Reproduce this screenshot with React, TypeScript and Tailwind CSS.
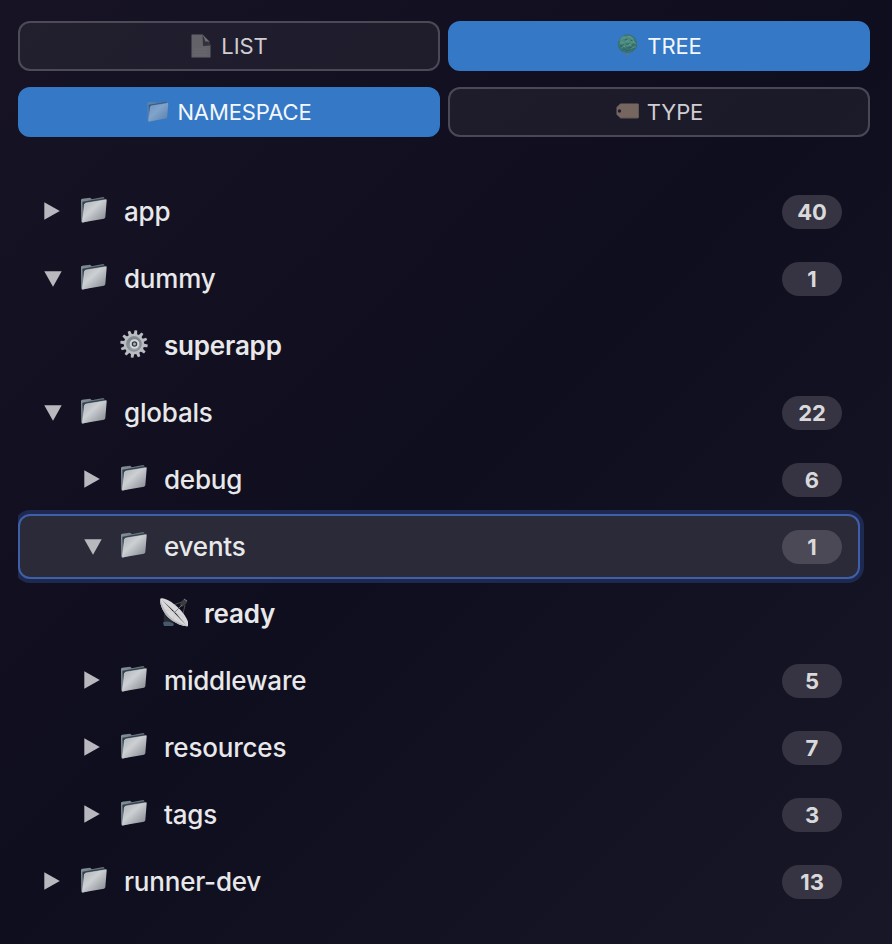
import React from "react";

type IconProps = { className?: string };

function Folder({ className = "" }: IconProps) {
  return (
    <svg viewBox="0 0 78 78" className={className} aria-hidden="true">
      <defs>
        <linearGradient id="folderFront" x1="0" y1="0" x2="1" y2="1">
          <stop offset="0" stopColor="#a9afb5" />
          <stop offset="0.42" stopColor="#cdd0d3" />
          <stop offset="1" stopColor="#7d838a" />
        </linearGradient>
        <linearGradient id="folderBack" x1="0" y1="0" x2="1" y2="0">
          <stop offset="0" stopColor="#86929b" />
          <stop offset="1" stopColor="#5c6973" />
        </linearGradient>
      </defs>
      <path d="M0 9 Q0 6 4 5 L27 2 Q30 2 32 7 L66 0 Q70 0 70 4 L72 58 L5 77 Q1 77 1 73Z" fill="url(#folderBack)" />
      <path d="M4 14 L30 10 L69 4 L72 10 L11 21 L6 68Z" fill="#35424c" />
      <path d="M10 24 Q10 20 15 18 L73 8 Q78 7 77 11 L73 60 Q73 64 69 65 L7 76 Q3 77 4 73Z" fill="url(#folderFront)" />
      <path d="M5 74 L10 24 Q10 20 15 18 L76 8" fill="none" stroke="#d3d8dc" strokeWidth="1.800" />
    </svg>
  );
}

function Page({ className = "" }: IconProps) {
  return (
    <svg viewBox="0 0 20 24" className={className} aria-hidden="true">
      <path d="M.5.5H11.500L19.500 11V23.500H.5Z" fill="#646269" />
      <path d="M11.500 1L19.500 11.500L12 12Z" fill="#34313c" />
      <path d="M11.500.5L19.500 8.500Q15.500 6.500 14.500 7.800Q13.500 4 11.500.5Z" fill="#716f76" />
      <path d="M3 15H16M3 18H16M3 21H16" stroke="#706e75" strokeWidth=".6" />
    </svg>
  );
}

function Tree({ className = "" }: IconProps) {
  return (
    <svg viewBox="0 0 20 23" className={className} aria-hidden="true">
      <path d="M9 17H11L10.800 22.500H9.500Z" fill="#6d7478" />
      <path d="M10 .3Q13 0 15 2Q18 3 18.500 6Q20.500 8 19.500 11Q20 14 17 16Q15.500 18.500 12 18.500Q10 20 7.500 18.500Q4 18.500 2.500 16Q0 14 .5 11Q-.5 8 2 6Q2 3.500 5 2.500Q7 0 10 .3Z" fill="#387372" />
      <ellipse cx="9.500" cy="7" rx="7.500" ry="5.500" fill="#4c897f" />
      <path d="M4 5Q6 2 8 4M10 3Q13 1 15 5M2 10Q4 7 6 9M8 8Q10 5 12 8M14 8Q17 6 18 10M4 14Q6 11 8 13M10 12Q12 9 14 12M14 15Q16 12 18 13" fill="none" stroke="#639d8e" strokeWidth=".9" />
      <path d="M3 12Q5 13 6 10M8 10Q11 11 12 9M14 11L16 10M5 16L8 15M11 14L14 13M7 6L10 5M13 6L15 7M14 16L17 14M8 17L12 16" fill="none" stroke="#2f6068" strokeWidth=".9" />
    </svg>
  );
}

function Tag({ className = "" }: IconProps) {
  return (
    <svg viewBox="0 0 23 16" className={className} aria-hidden="true">
      <path d="M4.500.5H22L22.800 1.200V14.500L22 15.300H4.500L.5 11.500V4.300Z" fill="#75675f" />
      <circle cx="3.500" cy="8" r="1.700" fill="#211e2d" />
      <path d="M4.500 15.200H22" stroke="#51474c" strokeWidth=".7" />
    </svg>
  );
}

const teeth = [0, 30, 60, 90, 120, 150, 180, 210, 240, 270, 300, 330];

function Gear({ className = "" }: IconProps) {
  return (
    <svg viewBox="0 0 28 28" className={className} aria-hidden="true">
      <defs>
        <linearGradient id="gearMetal" x1="0" y1="0" x2="0" y2="1">
          <stop offset="0" stopColor="#737c83" />
          <stop offset="1" stopColor="#a0a7ac" />
        </linearGradient>
      </defs>
      {teeth.map((angle) => (
        <path key={angle} d="M12.200 5L12.700 .3H15.300L15.800 5Z" fill="#b9bcc0" transform={`rotate(${angle + 8} 14 14)`} />
      ))}
      <circle cx="14" cy="14" r="9" fill="url(#gearMetal)" stroke="#b9bdc1" strokeWidth="2.500" />
      <circle cx="14" cy="14" r="7" fill="none" stroke="#858e94" strokeWidth="1" />
      <circle cx="14.500" cy="14" r="3.800" fill="#343a44" stroke="#d6d9dc" strokeWidth="2" />
      <circle cx="14.500" cy="14" r="1.500" fill="#a7adb3" />
    </svg>
  );
}

function Dish({ className = "" }: IconProps) {
  return (
    <svg viewBox="0 0 28 29" className={className} aria-hidden="true">
      <path d="M4 14L3.500 26H14L12 20Z" fill="#24282f" />
      <path d="M3 24.500Q8 22 14 26L13 28H4Z" fill="#46596b" />
      <path d="M13 7L22 4M25 7L22 20" stroke="#4e4e51" strokeWidth="1" fill="none" />
      <path d="M21 4L24 1L27.500 3L26 6L22 9L20 7Z" fill="#3c3d40" />
      <path d="M24 1L27 3" stroke="#818184" strokeWidth="1" />
      <path d="M.4 .8C3 -1 11 3 18 9.500C25 16 30 25 28 28C25 29 16 26 9.500 20.500C2.500 14.500 -.8 5 .4 .8Z" fill="#d8d8da" />
      <path d="M.4 .8C-.8 5 2.500 14.500 9.500 20.500C16 26 25 29 28 28C22 26.500 15 23.500 10 18.500C5 13.500 1.500 6 .4 .8Z" fill="#bababd" />
      <path d="M2 2L15 14L26 27M15 14L5 12M15 14L13 22M15 14L24 19" stroke="#c3c4c7" strokeWidth=".5" />
      <path d="M15 14L22 7" stroke="#7c7c80" strokeWidth=".9" />
    </svg>
  );
}

function Arrow({ open }: { open: boolean }) {
  return (
    <svg viewBox="0 0 18 18" className={`h-[18px] w-[18px] shrink-0 ${open ? "" : "mb-[2px]"}`} aria-hidden="true">
      <path d={open ? "M.3 1.200H17.700L9 16.700Z" : "M.3.200L15.800 9L.3 17.800Z"} fill="#b9b8be" />
    </svg>
  );
}

function ModeButton({ active = false, label, icon }: { active?: boolean; label: string; icon: React.ReactNode }) {
  return (
    <button
      className={`flex h-[50px] flex-1 items-center justify-center rounded-[12px] border-2 pl-px text-[22px] leading-none tracking-[-0.1px] ${
        active ? "border-[#3478c6] bg-[#3478c6] text-[#f3f7fc]" : "border-white/20 bg-white/5 text-[#cfced3]"
      }`}
    >
      {icon}
      <span>{label}</span>
    </button>
  );
}

type Node = { name: string; depth: number; count?: number; open?: boolean; selected?: boolean; leaf?: "gear" | "dish" };

const nodes: Node[] = [
  { name: "app", depth: 0, count: 40 },
  { name: "dummy", depth: 0, count: 1, open: true },
  { name: "superapp", depth: 1, leaf: "gear" },
  { name: "globals", depth: 0, count: 22, open: true },
  { name: "debug", depth: 1, count: 6 },
  { name: "events", depth: 1, count: 1, open: true, selected: true },
  { name: "ready", depth: 2, leaf: "dish" },
  { name: "middleware", depth: 1, count: 5 },
  { name: "resources", depth: 1, count: 7 },
  { name: "tags", depth: 1, count: 3 },
  { name: "runner-dev", depth: 0, count: 13 },
];

const indents = ["pl-6", "pl-16", "pl-[104px]"];

function TreeRow({ node }: { node: Node }) {
  const state = node.selected
    ? "border-[#405fab] bg-[#2b2a39] ring-4 ring-[#1e2950]"
    : "border-transparent";
  return (
    <div className={`flex h-[65px] w-[842px] items-center rounded-[12px] border-2 pr-4 ${indents[node.depth]} ${state}`}>
      {node.leaf ? <span className="w-[18px] shrink-0" /> : <Arrow open={!!node.open} />}
      <span className="ml-[17px] flex w-[30px] shrink-0 justify-center">
        {node.leaf === "gear" ? (
          <Gear className="mb-1 h-7 w-7" />
        ) : node.leaf === "dish" ? (
          <Dish className="mb-[3px] h-[29px] w-7" />
        ) : (
          <Folder className="mb-[3px] h-[26px] w-[26px]" />
        )}
      </span>
      <span className={`ml-[15px] flex-1 text-[26px] leading-8 tracking-[-0.2px] text-[#e8e8ea] ${node.leaf ? "font-semibold" : "font-medium"}`}>
        {node.name}
      </span>
      {node.count !== undefined && (
        <span className={`flex h-[34px] w-[60px] items-center justify-center rounded-full text-[22px] font-bold leading-none text-[#d9d9dc] ${node.selected ? "bg-[#4a4955]" : "bg-[#363442]"}`}>
          {node.count}
        </span>
      )}
    </div>
  );
}

export default function App() {
  return (
    <main className="h-[944px] w-[892px] overflow-hidden bg-[linear-gradient(135deg,#171324_0%,#0f0e1e_50%,#171728_100%)] pl-[18px] pt-[21px] font-['Inter',sans-serif]">
      <div className="flex w-[852px] flex-col gap-4">
        <div className="flex gap-2">
          <ModeButton label="LIST" icon={<Page className="mb-px mr-[10px] h-6 w-5" />} />
          <ModeButton active label="TREE" icon={<Tree className="mb-px mr-[9px] h-[23px] w-[21px]" />} />
        </div>
        <div className="flex gap-2">
          <ModeButton active label="NAMESPACE" icon={<Folder className="mb-px mr-2 h-[21px] w-[22px] opacity-50" />} />
          <ModeButton label="TYPE" icon={<Tag className="mb-[2px] mr-2 h-4 w-[23px]" />} />
        </div>
      </div>
      <div className="mt-[38px] flex w-[852px] flex-col gap-[2px] overflow-hidden pt-1">
        {nodes.map((node) => (
          <TreeRow key={node.name} node={node} />
        ))}
      </div>
    </main>
  );
}
